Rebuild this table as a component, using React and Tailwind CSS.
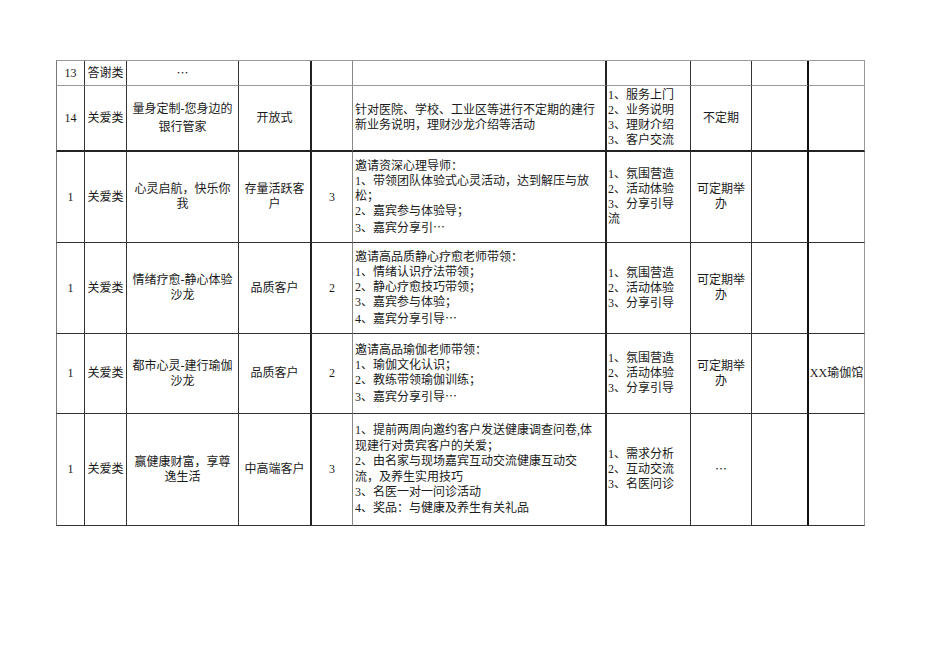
const COLS = [
  'border-r border-r-[#333] border-l border-l-[#777] items-center text-center',
  'border-r border-r-[#333] items-center text-center',
  'border-r border-r-[#333] items-center text-center',
  'border-r-2 border-r-[#222] items-center text-center',
  'border-r border-r-[#888] items-center text-center',
  'border-r-2 border-r-[#222] items-start text-left pl-[2px]',
  'border-r border-r-[#333] items-start text-left pl-[1px]',
  'border-r border-r-[#333] items-center text-center',
  'border-r-2 border-r-[#111] items-center text-center',
  'border-r border-r-[#999] items-center text-center',
]

const ROWS = [
  'border-b border-b-[#999]',
  'border-b-2 border-b-[#222]',
  'border-b border-b-[#333]',
  'border-b border-b-[#333]',
  'border-b border-b-[#333]',
  'border-b border-b-[#333]',
]

const serviceLines = ['1、氛围营造', '2、活动体验', '3、分享引导']

// each cell: array of lines, or { lines, leading }
const DATA = [
  [['13'], ['答谢类'], ['…'], [], [], [], [], [], [], []],
  [
    ['14'],
    ['关爱类'],
    { lines: ['量身定制-您身边的', '银行管家'], leading: 'leading-[18px]' },
    ['开放式'],
    [],
    ['针对医院、学校、工业区等进行不定期的建行', '新业务说明，理财沙龙介绍等活动'],
    ['1、服务上门', '2、业务说明', '3、理财介绍', '3、客户交流'],
    ['不定期'],
    [],
    [],
  ],
  [
    ['1'],
    ['关爱类'],
    ['心灵启航，快乐你', '我'],
    ['存量活跃客', '户'],
    ['3'],
    [
      '邀请资深心理导师：',
      '1、带领团队体验式心灵活动，达到解压与放',
      '松；',
      '2、嘉宾参与体验导；',
      '3、嘉宾分享引…',
    ],
    ['1、氛围营造', '2、活动体验', '3、分享引导', '流'],
    ['可定期举', '办'],
    [],
    [],
  ],
  [
    ['1'],
    ['关爱类'],
    ['情绪疗愈-静心体验', '沙龙'],
    ['品质客户'],
    ['2'],
    [
      '邀请高品质静心疗愈老师带领：',
      '1、情绪认识疗法带领；',
      '2、静心疗愈技巧带领；',
      '3、嘉宾参与体验；',
      '4、嘉宾分享引导…',
    ],
    serviceLines,
    ['可定期举', '办'],
    [],
    [],
  ],
  [
    ['1'],
    ['关爱类'],
    ['都市心灵-建行瑜伽', '沙龙'],
    ['品质客户'],
    ['2'],
    ['邀请高品瑜伽老师带领：', '1、瑜伽文化认识；', '2、教练带领瑜伽训练；', '3、嘉宾分享引导…'],
    serviceLines,
    ['可定期举', '办'],
    [],
    ['XX瑜伽馆'],
  ],
  [
    ['1'],
    ['关爱类'],
    ['赢健康财富，享尊', '逸生活'],
    ['中高端客户'],
    ['3'],
    {
      lines: [
        '1、提前两周向邀约客户发送健康调查问卷,体',
        '现建行对贵宾客户的关爱；',
        '2、由名家与现场嘉宾互动交流健康互动交',
        '流，及养生实用技巧',
        '3、名医一对一问诊活动',
        '4、奖品：与健康及养生有关礼品',
      ],
      leading: 'leading-[15.5px]',
    },
    ['1、需求分析', '2、互动交流', '3、名医问诊'],
    ['…'],
    [],
    [],
  ],
]

const Line = ({ text }) => {
  const parts = text.split('…')
  return (
    <div className="whitespace-nowrap">
      {parts.map((part, i) => (
        <span key={i}>
          {part}
          {i < parts.length - 1 && <span className="font-['Noto_Sans_CJK_SC',sans-serif]">…</span>}
        </span>
      ))}
    </div>
  )
}

const Cell = ({ cell, row, col }) => {
  const lines = Array.isArray(cell) ? cell : cell.lines
  const leading = Array.isArray(cell) ? 'leading-[15px]' : cell.leading
  return (
    <div className={`flex flex-col justify-center overflow-hidden ${leading} ${COLS[col]} ${ROWS[row]}`}>
      {lines.map((text, i) => (
        <Line key={i} text={text} />
      ))}
    </div>
  )
}

export default function App() {
  return (
    <div className="min-h-[672px] w-[950px] bg-white pl-[56px] pt-[60px] font-['Liberation_Serif','Noto_Sans_CJK_SC',serif] text-[12px] text-[#1a1a1a]">
      <div className="grid w-[809px] grid-cols-[29px_42px_112px_73px_41px_254px_84px_61px_57px_56px] grid-rows-[25px_66px_91px_91px_80px_112px] border-t border-t-[#999]">
        {DATA.map((row, r) =>
          row.map((cell, c) => <Cell key={`${r}-${c}`} cell={cell} row={r} col={c} />)
        )}
      </div>
    </div>
  )
}
